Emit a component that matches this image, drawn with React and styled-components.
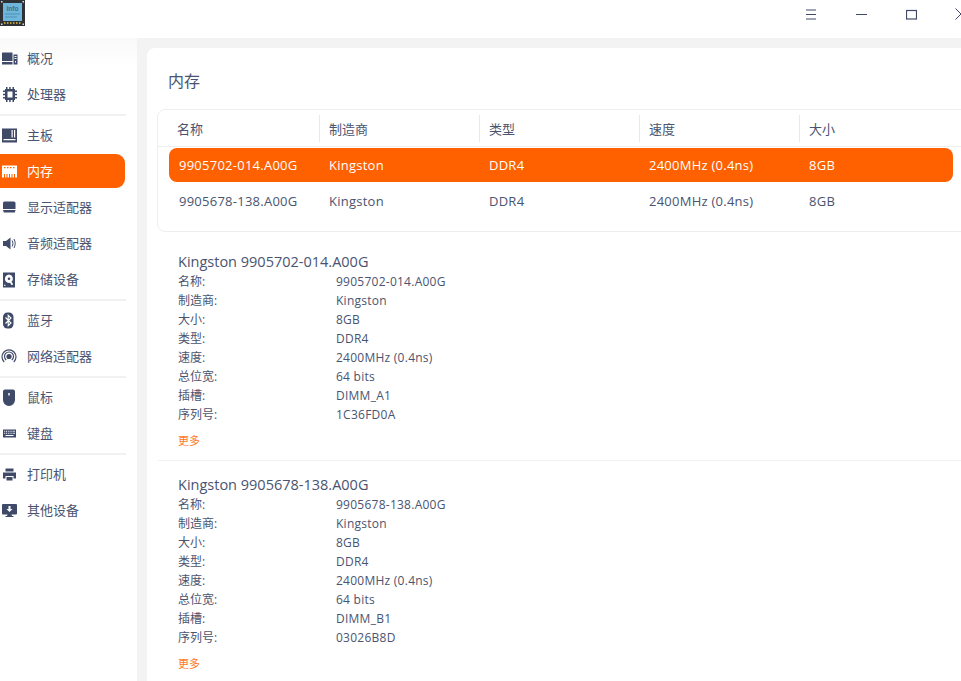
import styled, { createGlobalStyle } from "styled-components";

const GlobalStyle = createGlobalStyle`
  html, body { margin: 0; padding: 0; background: #fff; }
  * { box-sizing: border-box; }
`;

const ink = "#3f4a68";
const text = "#4a5470";
const FONT = `"Open Sans", "Noto Sans", "Noto Sans CJK SC", sans-serif`;

const icons = {
  overview: <path fillRule="evenodd" d="M1.500 2.500h9.500a.5.5 0 0 1 .5.5v8H1v-8a.5.5 0 0 1 .5-.5zM1 12h10.500v2.500H1zM12.500 4.500h4v10h-4zM13.500 6v1h2V6zM13.500 8v1h2V8zM14 11v1.500h1V11z" />,
  cpu: <><path fillRule="evenodd" d="M4 3h10v11H4zM6.500 5.500v6h5v-6z" /><path d="M5 1h1.500v2H5zM8.200 1h1.500v2H8.200zM11.500 1H13v2h-1.500zM5 14h1.500v2H5zM8.200 14h1.500v2H8.200zM11.500 14H13v2h-1.500zM2 4.500h2V6H2zM2 7.700h2v1.500H2zM2 11h2v1.500H2zM14 4.500h2V6h-2zM14 7.700h2v1.500h-2zM14 11h2v1.500h-2z" /></>,
  board: <path fillRule="evenodd" d="M1 1.500h15v14H1zM10.500 3v7.500h1.200V3zM13 3v7.500h1.200V3zM2.500 12v1.200h12V12z" />,
  memory: <path fillRule="evenodd" d="M1 2.500h15v12H1zM3 4v1.200h1.500V4zM6 4v1.200h1.500V4zM9 4v1.200h1.500V4zM12 4v1.200h1.500V4zM3 11v3.500h1V11zM5.500 11v3.500h1V11zM8 11v3.500h1V11zM10.500 11v3.500h1V11zM13 11v3.500h1V11z" />,
  display: <><path d="M3.500 2.500h9.500a1.500 1.500 0 0 1 1.500 1.500v6h-12.500v-6a1.500 1.500 0 0 1 1.500-1.500z" /><path d="M2 11h12.500l-.7 2.500h-11z" /></>,
  audio: <><path d="M2 6h3l4.500-3.500v12L5 11H2z" /><path d="M11.200 5.500c.9 1.800.9 4.200 0 6M13 4c1.600 2.800 1.600 6.200 0 9" fill="none" stroke={ink} strokeWidth="1" /></>,
  disk: <path fillRule="evenodd" d="M2 1.500h12v15H2zM8 3.500a4.200 4.200 0 1 0 1 8.300l1.700 2.500 1.500-1-1.700-2.500A4.200 4.200 0 0 0 8 3.500zM8 6.400a1.300 1.300 0 1 1 0 2.600 1.300 1.300 0 0 1 0-2.600zM3.200 13.800v1.200h1.200v-1.200z" />,
  bluetooth: <><rect x="2" y="0.500" width="10.500" height="16" rx="4.500" /><path d="M4.500 5.500l5.500 5.500-2.800 2.700V3.300L10 6l-5.500 5.500" fill="none" stroke="#fff" strokeWidth="1.100" /></>,
  network: <><circle cx="8" cy="8.500" r="2.600" /><path d="M5.200 12a4.500 4.500 0 1 1 5.600 0M3.200 14a7 7 0 1 1 9.600 0" fill="none" stroke={ink} strokeWidth="1.200" /></>,
  mouse: <path fillRule="evenodd" d="M4 .5h8a2 2 0 0 1 2 2v8.500a6 6 0 0 1-12 0V2.500a2 2 0 0 1 2-2zM7.300 4v2.500h1.400V4z" />,
  keyboard: <path fillRule="evenodd" d="M2 4.500h13v8H2zM3.200 5.700v1h1v-1zM5 5.700v1h1v-1zM6.800 5.700v1h1v-1zM8.600 5.700v1h1v-1zM10.400 5.700v1h1v-1zM12.200 5.700v1h1.600v-1zM3.200 7.800v1h1v-1zM5 7.800v1h1v-1zM6.800 7.800v1h1v-1zM8.600 7.800v1h1v-1zM10.400 7.800v1h1v-1zM12.200 7.800v1h1.600v-1zM4.500 10v1h8v-1z" />,
  printer: <path fillRule="evenodd" d="M4.500 2.500h8v3h-8zM2 6.500h13v6H12.500v-2.500h-8v2.500H2zM5.500 11h6v3.500h-6z" />,
  other: <path fillRule="evenodd" d="M2 2h13a1 1 0 0 1 1 1v8.500a1 1 0 0 1-1 1h-4.500l.5 1.500h1.500v1h-8v-1H6l.5-1.500H2a1 1 0 0 1-1-1V3a1 1 0 0 1 1-1zM7.500 4v3H5.500l3 3 3-3h-2V4z" />,
};

const groups = [
  [["overview", "概况"], ["cpu", "处理器"]],
  [["board", "主板"], ["memory", "内存"], ["display", "显示适配器"], ["audio", "音频适配器"], ["disk", "存储设备"]],
  [["bluetooth", "蓝牙"], ["network", "网络适配器"]],
  [["mouse", "鼠标"], ["keyboard", "键盘"]],
  [["printer", "打印机"], ["other", "其他设备"]],
];

const columns = [
  { title: "名称", width: 162 },
  { title: "制造商", width: 160 },
  { title: "类型", width: 160 },
  { title: "速度", width: 160 },
  { title: "大小", width: 160 },
];

const modules = [
  { name: "9905702-014.A00G", slot: "DIMM_A1", serial: "1C36FD0A" },
  { name: "9905678-138.A00G", slot: "DIMM_B1", serial: "03026B8D" },
];

const Logo = () => (
  <svg width="25" height="26" viewBox="0 0 25 26">
    <rect width="25" height="26" fill="#2e3236" />
    <rect x="3" y="3" width="19" height="18" fill="#6fb6dc" />
    <text x="12.500" y="11" fontSize="6.500" textAnchor="middle" fill="#3d6f8f" fontFamily="Liberation Sans" fontWeight="700">info</text>
    <path d="M5 14h15M5 17h12" stroke="#4f8fb3" strokeWidth="1" />
    <path d="M4 23h17" stroke="#e2c23e" strokeWidth="1.500" strokeDasharray="1.500 1.500" />
    <path d="M1 1h1.500v1.500H1zM22.500 1H24v1.500h-1.500zM1 23.500h1.500V25H1zM22.500 23.500H24V25h-1.500z" fill="#d8dadc" />
  </svg>
);

const NavIcon = ({ name, active }) => (
  <IconBox viewBox="0 0 17 17" fill={active ? "#fff" : ink}>{icons[name]}</IconBox>
);

const WindowButtons = () => (
  <Controls>
    <svg width="11" height="11" viewBox="0 0 11 11" stroke={ink} fill="none"><path d="M0 1h10M0 5.500h10M0 10h10" /></svg>
    <svg width="11" height="11" viewBox="0 0 11 11" stroke={ink} fill="none"><path d="M0 5.500h11" /></svg>
    <svg width="11" height="11" viewBox="0 0 11 11" stroke={ink} fill="none" strokeWidth="1.200"><rect x=".5" y="1.500" width="10" height="8.500" /></svg>
    <CloseGlyph width="12" height="12" viewBox="0 0 12 12" stroke={ink} fill="none"><path d="M.5.500l5.500 5.500-5.500 5.500" /></CloseGlyph>
  </Controls>
);

const Detail = ({ module, last }) => {
  const rows = [
    ["名称:", module.name],
    ["制造商:", "Kingston"],
    ["大小:", "8GB"],
    ["类型:", "DDR4"],
    ["速度:", "2400MHz (0.4ns)"],
    ["总位宽:", "64 bits"],
    ["插槽:", module.slot],
    ["序列号:", module.serial],
  ];
  return (
    <DetailBlock $last={last}>
      <DetailTitle>Kingston {module.name}</DetailTitle>
      {rows.map(([label, value]) => (
        <DetailRow key={label}>
          <DetailLabel>{label}</DetailLabel>
          <DetailValue>{value}</DetailValue>
        </DetailRow>
      ))}
      <More>更多</More>
    </DetailBlock>
  );
};

export default function App() {
  return (
    <>
      <GlobalStyle />
      <Page>
        <TitleBar>
          <Logo />
          <WindowButtons />
        </TitleBar>
        <Body>
          <Sidebar>
            {groups.map((group, i) => (
              <NavGroup key={i}>
                {group.map(([icon, label]) => (
                  <NavItem key={icon} $active={icon === "memory"}>
                    <NavIcon name={icon} active={icon === "memory"} />
                    <NavLabel>{label}</NavLabel>
                  </NavItem>
                ))}
              </NavGroup>
            ))}
          </Sidebar>
          <Main>
            <Card>
              <PageTitle>内存</PageTitle>
              <Table>
                <HeaderRow>
                  {columns.map((c) => (
                    <HeaderCell key={c.title} $width={c.width}>{c.title}</HeaderCell>
                  ))}
                </HeaderRow>
                {modules.map((m, i) => (
                  <Row key={m.name} $selected={i === 0}>
                    <Cell $width={150}>{m.name}</Cell>
                    <Cell $width={160}>Kingston</Cell>
                    <Cell $width={160}>DDR4</Cell>
                    <Cell $width={160}>2400MHz (0.4ns)</Cell>
                    <Cell $width={100}>8GB</Cell>
                  </Row>
                ))}
              </Table>
              {modules.map((m, i) => (
                <Detail key={m.name} module={m} last={i === modules.length - 1} />
              ))}
            </Card>
          </Main>
        </Body>
      </Page>
    </>
  );
}

const Page = styled.div`
  width: 961px;
  height: 681px;
  overflow: hidden;
  font-family: ${FONT};
  color: ${text};
  background: #fff;
`;

const TitleBar = styled.div`
  height: 38px;
  display: flex;
  justify-content: space-between;
  align-items: flex-start;
  background: #fff;
`;

const Controls = styled.div`
  display: flex;
  align-items: center;
  gap: 39px;
  height: 28px;
  margin-right: -6px;
  svg { display: block; flex: none; }
`;

const CloseGlyph = styled.svg`
  margin-left: -1px;
`;

const Body = styled.div`
  display: flex;
  height: 643px;
  background: #f3f3f3;
`;

const Sidebar = styled.nav`
  width: 137px;
  flex: none;
  padding-top: 2px;
  background: linear-gradient(#f9f9f9, #ffffff 30px);
`;

const NavGroup = styled.div`
  width: 126px;
  padding-bottom: 2px;
  margin-bottom: 1px;
  border-bottom: 2px solid #f1f1f1;
  &:last-child { border-bottom: none; }
`;

const NavItem = styled.div`
  display: flex;
  align-items: center;
  width: 125px;
  height: ${(p) => (p.$active ? "34px" : "36px")};
  margin: ${(p) => (p.$active ? "1px 0" : "0")};
  padding-left: 1px;
  gap: 9px;
  font-size: 13px;
  color: ${(p) => (p.$active ? "#fff" : text)};
  background: ${(p) => (p.$active ? "#ff6000" : "transparent")};
  border-radius: 0 9px 9px 0;
`;

const NavLabel = styled.span`
  margin-top: -2px;
`;

const IconBox = styled.svg`
  width: 17px;
  height: 17px;
  flex: none;
`;

const Main = styled.main`
  flex: 1;
  min-width: 0;
  padding: 10px 0 0 10px;
`;

const Card = styled.section`
  width: 830px;
  height: 700px;
  padding: 0 0 0 10px;
  background: #fff;
  border-radius: 8px 0 0 0;
`;

const PageTitle = styled.h1`
  margin: 0;
  height: 61px;
  padding: 21px 0 0 11px;
  font-size: 16px;
  line-height: 24px;
  font-weight: 400;
`;

const Table = styled.div`
  height: 123px;
  width: 830px;
  border: 1px solid #eeeeee;
  border-radius: 8px;
  margin-bottom: 20px;
  font-size: 13px;
`;

const HeaderRow = styled.div`
  display: flex;
  align-items: center;
  height: 37px;
  border-bottom: 1px solid #eeeeee;
`;

const HeaderCell = styled.div`
  width: ${(p) => p.$width}px;
  height: 27px;
  line-height: 29px;
  padding-left: ${(p) => (p.$width === 162 ? "19px" : "9px")};
  border-right: 1px solid #e8e8e8;
  &:last-child { border-right: none; }
`;

const Row = styled.div`
  display: flex;
  align-items: center;
  width: 784px;
  height: 34px;
  margin: 1px 0 2px 11px;
  padding-left: 10px;
  border-radius: 8px;
  letter-spacing: 0.25px;
  color: ${(p) => (p.$selected ? "#fff" : text)};
  background: ${(p) => (p.$selected ? "#ff6000" : "transparent")};
`;

const Cell = styled.div`
  width: ${(p) => p.$width}px;
  flex: none;
`;

const DetailBlock = styled.div`
  height: ${(p) => (p.$last ? "auto" : "209px")};
  margin-left: 1px;
  padding-left: 20px;
  width: 830px;
  border-bottom: ${(p) => (p.$last ? "none" : "1px solid #f1f1f1")};
  margin-bottom: 14px;
`;

const DetailTitle = styled.div`
  font-size: 14.5px;
  line-height: 20px;
`;

const DetailRow = styled.div`
  display: flex;
  height: 19px;
  line-height: 19px;
  font-size: 12px;
`;

const DetailLabel = styled.span`
  width: 158px;
  flex: none;
`;

const DetailValue = styled.span`
  letter-spacing: 0.25px;
`;

const More = styled.div`
  margin-top: 8px;
  font-size: 11px;
  line-height: 18px;
  color: #ff7a26;
`;
